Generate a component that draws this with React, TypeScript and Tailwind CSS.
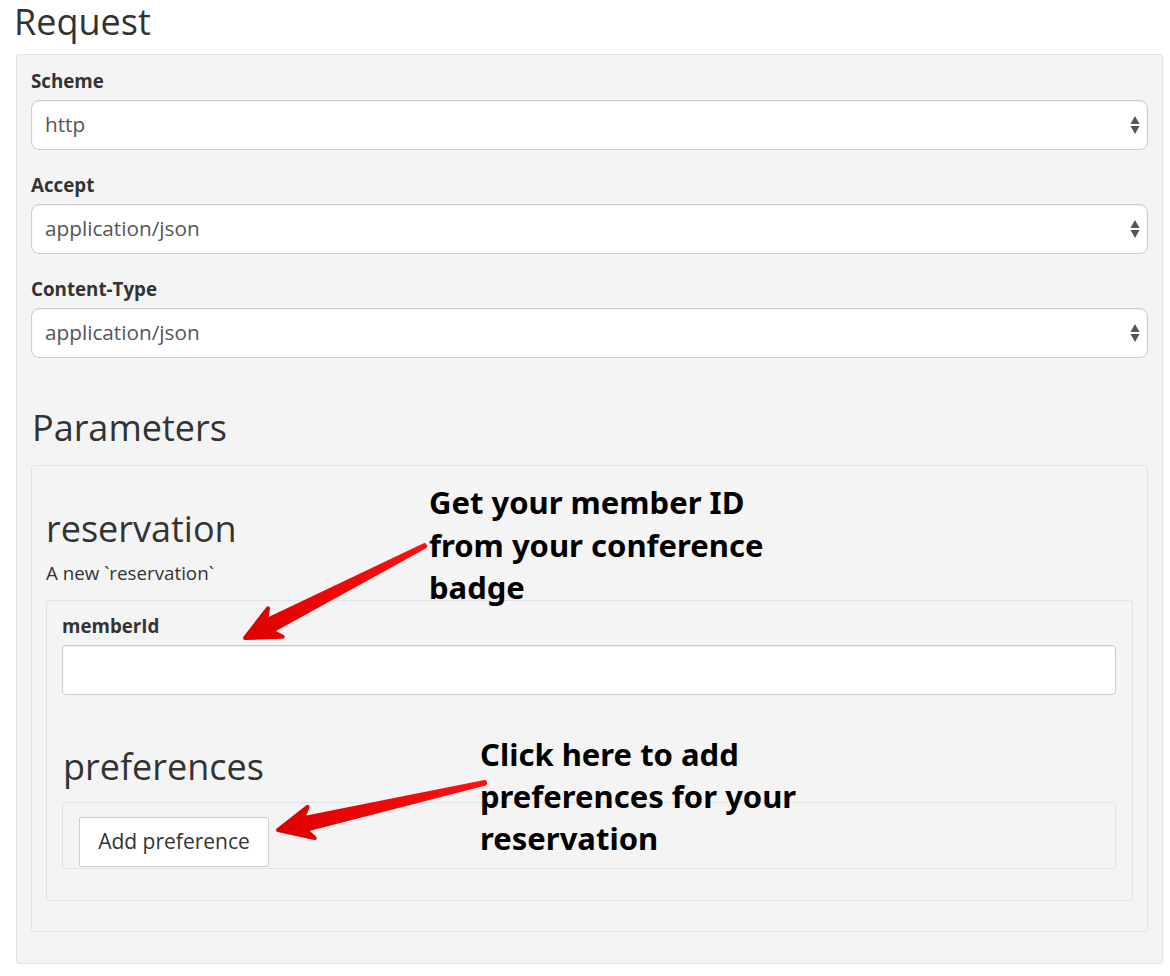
import React from 'react'

const BODY = '"Open Sans", "Noto Sans", "Liberation Sans", sans-serif'
const NOTE = '"Noto Sans", "Open Sans", "Liberation Sans", sans-serif'

function SelectArrows() {
  return (
    <svg width="10" height="20" viewBox="0 0 10 20" className="shrink-0">
      <path d="M5 1 L9.5 9 L0.5 9 Z" fill="#555" />
      <path d="M5 19 L9.5 11 L0.5 11 Z" fill="#555" />
    </svg>
  )
}

function SelectField({ label, value, className = '' }: { label: string; value: string; className?: string }) {
  return (
    <div className={`flex flex-col ${className}`}>
      <div className="text-[18.75px] font-bold leading-6 text-[#333] mb-[7px]">{label}</div>
      <div className="h-[50px] bg-white border border-[#cccccc] rounded-[8px] shadow-[inset_0_1px_2px_rgba(0,0,0,0.08)] flex items-center justify-between pl-[13px] pr-[7px]">
        <span className="text-[20.75px] text-[#555]">{value}</span>
        <SelectArrows />
      </div>
    </div>
  )
}

// arrow polygon from tail to tip, tapered shaft with a swept-back head
function arrowPath(tx: number, ty: number, px: number, py: number) {
  const dx = px - tx
  const dy = py - ty
  const L = Math.sqrt(dx * dx + dy * dy)
  const ux = dx / L
  const uy = dy / L
  const nx = -uy
  const ny = ux
  const pt = (a: number, b: number) =>
    `${(px - ux * a + nx * b).toFixed(1)},${(py - uy * a + ny * b).toFixed(1)}`
  return [
    pt(0, 0),
    pt(34, 16),
    pt(27, 6),
    pt(L, 1),
    pt(L, -0.5),
    pt(27, -6),
    pt(34, -16),
  ].join(' ')
}

function Arrows() {
  return (
    <svg
      className="absolute left-0 top-0 pointer-events-none"
      width="1170"
      height="976"
      viewBox="0 0 1170 976"
    >
      <defs>
        <linearGradient id="red1" x1="425" y1="546" x2="243" y2="639" gradientUnits="userSpaceOnUse">
          <stop offset="0" stopColor="#ff1010" />
          <stop offset="1" stopColor="#dd0000" />
        </linearGradient>
        <linearGradient id="red2" x1="485" y1="783" x2="276" y2="830" gradientUnits="userSpaceOnUse">
          <stop offset="0" stopColor="#ff1010" />
          <stop offset="1" stopColor="#dd0000" />
        </linearGradient>
      </defs>
      <polygon
        points={arrowPath(425, 546, 245, 638)}
        fill="url(#red1)"
        stroke="url(#red1)"
        strokeWidth="4"
        strokeLinejoin="round"
      />
      <polygon
        points={arrowPath(485, 783, 278, 830)}
        fill="url(#red2)"
        stroke="url(#red2)"
        strokeWidth="4"
        strokeLinejoin="round"
      />
    </svg>
  )
}

export default function App() {
  return (
    <div
      className="relative w-[1170px] h-[976px] bg-white text-[#333] overflow-hidden flex flex-col"
      style={{ fontFamily: BODY }}
    >
      <h2 className="pl-[14px] text-[36px] leading-[44px] font-normal text-[#333]">Request</h2>

      <div className="ml-[16px] mt-[10px] w-[1147px] bg-[#f4f4f4] border border-[#e3e3e3] rounded-[3px] pt-[14px] px-[14px] pb-[31px] flex flex-col">
        <SelectField label="Scheme" value="http" />
        <SelectField label="Accept" value="application/json" className="mt-[23px]" />
        <SelectField label="Content-Type" value="application/json" className="mt-[23px]" />

        <h3 className="mt-[50px] text-[36px] leading-[40px] font-normal pl-[1px]">Parameters</h3>

        <div className="mt-[17px] bg-[#f4f4f4] border border-[#e3e3e3] rounded-[3px] pt-[43px] px-[14px] pb-[30px] flex flex-col">
          <h4 className="text-[36px] leading-[40px] font-normal">reservation</h4>
          <p className="mt-[12px] text-[18.75px] leading-6">A new `reservation`</p>

          <div className="mt-[15px] border border-[#e3e3e3] rounded-[3px] pt-[13px] pl-[15px] pr-[16px] pb-[31px] flex flex-col">
            <div className="text-[18.75px] font-bold leading-6 mb-[7px]">memberId</div>
            <div className="h-[50px] bg-white border border-[#cccccc] rounded-[4px] shadow-[inset_0_1px_1px_rgba(0,0,0,0.075)]" />

            <h4 className="mt-[52px] text-[36px] leading-[40px] font-normal pl-[1px]">preferences</h4>

            <div className="mt-[15px] border border-[#e3e3e3] rounded-[3px] pt-[14px] pl-[16px] pb-[1px] flex">
              <button className="h-[50px] w-[190px] bg-white border border-[#cccccc] rounded-[2px] text-[21px] text-[#333]">
                Add preference
              </button>
            </div>
          </div>
        </div>
      </div>

      <div
        className="absolute left-[429px] top-[481px] text-[31px] leading-[42.5px] font-bold text-black"
        style={{ fontFamily: NOTE }}
      >
        Get your member ID
        <br />
        from your conference
        <br />
        badge
      </div>
      <div
        className="absolute left-[480px] top-[733px] text-[31px] leading-[42px] font-bold text-black"
        style={{ fontFamily: NOTE }}
      >
        Click here to add
        <br />
        preferences for your
        <br />
        reservation
      </div>

      <Arrows />
    </div>
  )
}
